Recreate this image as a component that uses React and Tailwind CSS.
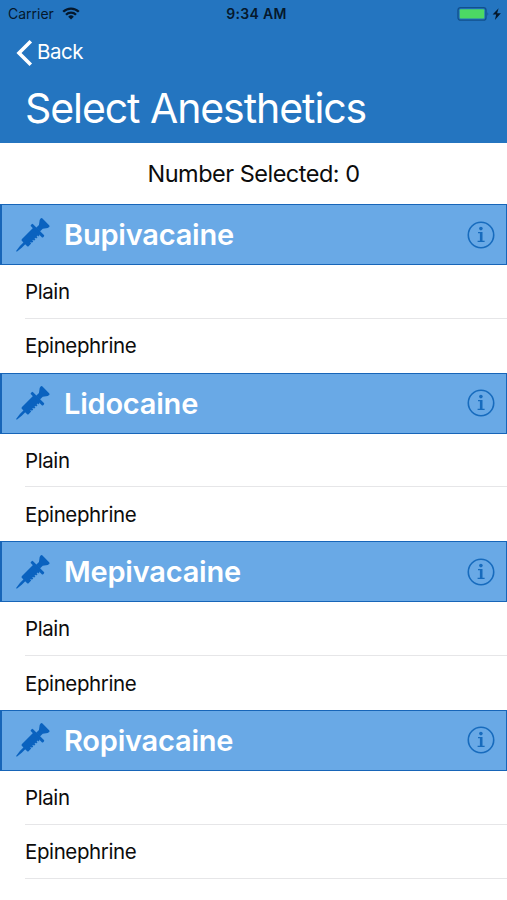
import React from 'react';

const anesthetics = ['Bupivacaine', 'Lidocaine', 'Mepivacaine', 'Ropivacaine'];
const options = ['Plain', 'Epinephrine'];

function WifiIcon() {
  return (
    <svg width="18" height="13" viewBox="0 0 18 13" fill="none" stroke="#05182c" strokeWidth="2.3">
      <path d="M1.2 4.8a11 11 0 0 1 15.6 0" />
      <path d="M4 7.8a7 7 0 0 1 10 0" />
      <path d="M6.2 9.7a4 4 0 0 1 5.6 0L9 12.6z" fill="#05182c" stroke="none" />
    </svg>
  );
}

function BatteryIcon() {
  return (
    <svg width="46" height="16" viewBox="0 0 46 16">
      <rect x="1" y="1.6" width="28" height="12.6" rx="2.5" fill="#2475c0" stroke="#12508c" strokeWidth="1.3" />
      <rect x="2.7" y="3.2" width="24.6" height="9.4" rx="1" fill="#4cd964" />
      <path d="M30.5 6q1.6 2 0 4z" fill="#12508c" />
      <path d="M41.6 2.2L35.6 8.6h3.6l-1.3 5.4 6-6.7h-3.8z" fill="#05182c" />
    </svg>
  );
}

function SyringeIcon() {
  return (
    <svg width="42" height="42" viewBox="0 0 126 126" className="shrink-0" fill="#0a62bf">
      <g transform="translate(13 112) rotate(-45)">
        {/* needle */}
        <path d="M0 -1L20 -4H37V4H20L0 2z" />
        {/* barrel with graduation marks */}
        <path d="M34 -11Q34 -14 38 -14H90V12H84V15H78V11H75V15H69V11H66V15H60V11H57V15H51V11H48V15H38Q34 15 34 12z" />
        {/* flange */}
        <rect x="84" y="-25" width="9" height="52" rx="3" />
        {/* plunger */}
        <path d="M92 -8H104L116 -17Q125 -20 125 -14V14Q125 20 116 17L104 8H92z" />
      </g>
    </svg>
  );
}

function InfoIcon() {
  return (
    <svg width="28" height="28" viewBox="0 0 28 28" className="shrink-0" fill="none" stroke="#176bbd">
      <circle cx="14" cy="14" r="12.7" strokeWidth="1.6" />
      <circle cx="13.9" cy="7.6" r="1.8" fill="#176bbd" stroke="none" />
      <path d="M11 11.6h3.4M10.6 20.4h7" strokeWidth="1.3" />
      <path d="M14.2 11v9.6" strokeWidth="2.6" />
    </svg>
  );
}

function Section({ name }) {
  return (
    <section>
      <div className="h-[61px] flex items-center bg-[#69a9e6] border border-l-2 border-[#1765b8] pl-[10px] pr-[11px]">
        <SyringeIcon />
        <h2 className="ml-[10px] flex-1 text-[29px] leading-none font-semibold text-white tracking-[-0.22px]">{name}</h2>
        <InfoIcon />
      </div>
      {options.map((option, i) => (
        <div key={option} className="pl-[25px]">
          <div className={`h-[53.8px] pt-[2px] flex items-center text-[20.5px] tracking-[-0.4px] ${i === 0 ? 'border-b border-[#e6e6e8]' : ''}`}>
            {option}
          </div>
        </div>
      ))}
    </section>
  );
}

export default function App() {
  return (
    <div className="w-[507px] h-[900px] overflow-hidden bg-white text-[#0c0c0c] font-['Inter',sans-serif]">
      <header className="h-[143px] bg-[#2475c0] text-white">
        <div className="h-[27px] grid grid-cols-3 items-center text-[#05182c]">
          <div className="flex items-center gap-[8px] pl-2 text-[14px]">
            <span>Carrier</span>
            <WifiIcon />
          </div>
          <div className="pl-[6px] text-center text-[14px] font-semibold tracking-[0.35px]">9:34 AM</div>
          <div className="flex justify-end pr-[4px]">
            <BatteryIcon />
          </div>
        </div>
        <button className="h-[51px] flex items-center pl-4 text-[20.5px] tracking-[-0.5px]">
          <svg width="17" height="28" viewBox="0 0 17 28" fill="none" stroke="white" strokeWidth="3.6" className="mr-1">
            <path d="M14.8 2.3L3 14l11.8 11.7" />
          </svg>
          Back
        </button>
        <h1 className="pl-[25px] h-[61px] flex items-center text-[41px] leading-none tracking-[-1.07px]">Select Anesthetics</h1>
      </header>
      <div className="h-[61px] flex items-center justify-center text-[23.5px] tracking-[-0.5px]">Number Selected: 0</div>
      <main>
        {anesthetics.map((name) => (
          <Section key={name} name={name} />
        ))}
      </main>
      <div className="ml-[25px] h-px bg-[#e6e6e8]" />
    </div>
  );
}
